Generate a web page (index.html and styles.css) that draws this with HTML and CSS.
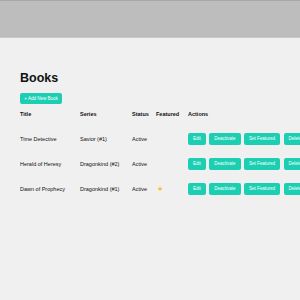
FILE: index.html
```html
<!DOCTYPE html>
<html lang="en">
<head>
  <meta charset="UTF-8">
  <title>Books</title>
  <link rel="stylesheet" href="styles.css">
</head>
<body>

<div class="topbar"></div>

<main class="content">
  <h1>Books</h1>
  <button class="btn add">+ Add New Book</button>

  <table class="books">
    <thead>
      <tr>
        <th class="c-title">Title</th>
        <th class="c-series">Series</th>
        <th class="c-status">Status</th>
        <th class="c-feat">Featured</th>
        <th class="c-actions">Actions</th>
      </tr>
    </thead>
    <tbody>
      <tr>
        <td>Time Detective</td>
        <td>Savior (#1)</td>
        <td>Active</td>
        <td></td>
        <td class="actions">
          <button class="btn">Edit</button>
          <button class="btn">Deactivate</button>
          <button class="btn">Set Featured</button>
          <button class="btn">Delete</button>
        </td>
      </tr>
      <tr>
        <td>Herald of Heresy</td>
        <td>Dragonkind (#2)</td>
        <td>Active</td>
        <td></td>
        <td class="actions">
          <button class="btn">Edit</button>
          <button class="btn">Deactivate</button>
          <button class="btn">Set Featured</button>
          <button class="btn">Delete</button>
        </td>
      </tr>
      <tr>
        <td>Dawn of Prophecy</td>
        <td>Dragonkind (#1)</td>
        <td>Active</td>
        <td><span class="star">★</span></td>
        <td class="actions">
          <button class="btn">Edit</button>
          <button class="btn">Deactivate</button>
          <button class="btn">Set Featured</button>
          <button class="btn">Delete</button>
        </td>
      </tr>
    </tbody>
  </table>
</main>

</body>
</html>
```

FILE: styles.css
```css
html, body {
  margin: 0;
  background: #f0f0f0;
  overflow: hidden;
}

body {
  font-family: "Liberation Sans", Arial, sans-serif;
  color: #111;
  width: 300px;
}

.topbar {
  height: 36px;
  background: #bdbdbd;
  border-top: 1px solid #a8a8a8;
  border-bottom: 1px solid #c8c8c8;
}

.content {
  padding: 33px 0 0 20px;
}

h1 {
  margin: 0 0 8px;
  font-size: 12.5px;
  line-height: 14px;
  font-weight: bold;
}

.btn {
  background: #1ccfb2;
  color: #fff;
  border: none;
  border-radius: 2px;
  font-family: inherit;
  font-size: 4.5px;
  height: 12px;
  padding: 0 5px;
  white-space: nowrap;
}

.add {
  display: block;
  width: 42px;
  height: 11px;
  padding: 0;
}

.books {
  table-layout: fixed;
  width: 330px;
  border-collapse: collapse;
  margin-top: 6px;
  font-size: 5.5px;
  white-space: nowrap;
}

.books th {
  text-align: left;
  font-weight: bold;
  padding: 0 0 8px;
  height: 8px;
}

.books td {
  padding: 0;
  height: 25px;
}

.c-title { width: 60px; }
.c-series { width: 52px; }
.c-status { width: 24px; }
.c-feat { width: 32px; }
.c-actions { width: 162px; }

.actions {
  display: flex;
  gap: 3.5px;
  align-items: center;
}

.actions .btn {
  flex: none;
}

.star {
  color: #f2c230;
  font-size: 7px;
  padding-left: 1px;
}
```
